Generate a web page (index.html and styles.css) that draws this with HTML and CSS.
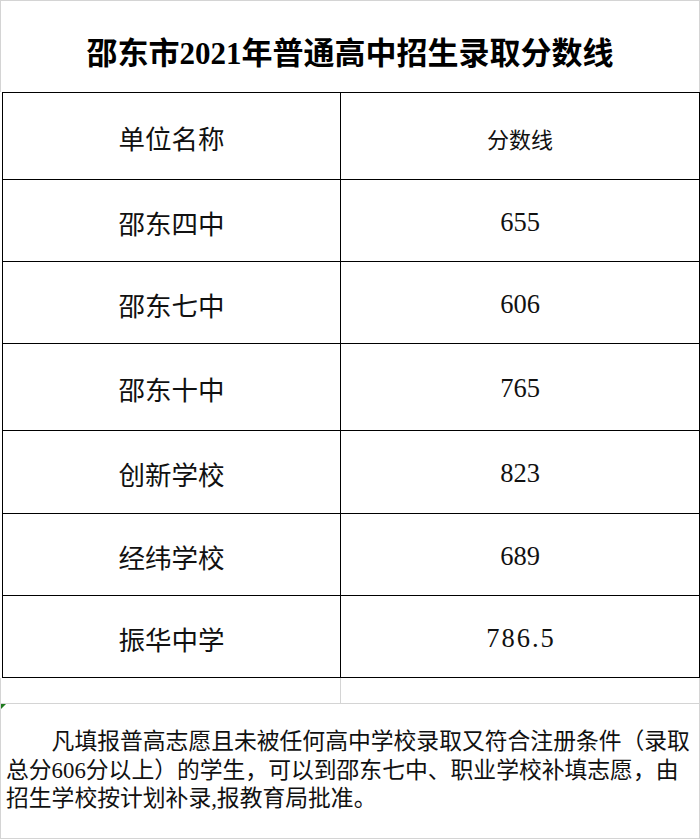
FILE: index.html
```html
<!DOCTYPE html>
<html lang="zh-CN">
<head>
<meta charset="utf-8">
<title>邵东市2021年普通高中招生录取分数线</title>
<link rel="stylesheet" href="styles.css">
</head>
<body>
<div class="sheet">
  <div class="title">邵东市2021年普通高中招生录取分数线</div>
  <div class="table">
    <div class="cell head">单位名称</div>
    <div class="cell head small">分数线</div>
    <div class="cell">邵东四中</div>
    <div class="cell">655</div>
    <div class="cell">邵东七中</div>
    <div class="cell">606</div>
    <div class="cell">邵东十中</div>
    <div class="cell">765</div>
    <div class="cell">创新学校</div>
    <div class="cell">823</div>
    <div class="cell">经纬学校</div>
    <div class="cell">689</div>
    <div class="cell">振华中学</div>
    <div class="cell decimal">786.5</div>
  </div>
  <div class="blank">
    <div class="blank-cell"></div>
    <div class="blank-cell"></div>
  </div>
  <div class="note">
    <span class="flag"></span>
    <p class="note-text">凡填报普高志愿且未被任何高中学校录取又符合注册条件（录取总分606分以上）的学生，可以到邵东七中、职业学校补填志愿，由招生学校按计划补录,报教育局批准。</p>
  </div>
</div>
</body>
</html>
```

FILE: styles.css
```css
html, body {
  margin: 0;
  padding: 0;
  background: #ffffff;
}

body {
  font-family: "Liberation Serif", "Noto Sans CJK SC", serif;
  color: #111111;
}

.sheet {
  width: 700px;
}

.title {
  box-sizing: border-box;
  width: 700px;
  height: 92px;
  border-top: 1px solid #d4d4d4;
  border-left: 1px solid #d4d4d4;
  border-right: 1px solid #d4d4d4;
  display: flex;
  align-items: center;
  justify-content: center;
  padding-top: 7px;
  font-size: 31px;
  font-weight: 700;
  color: #000000;
}

.table {
  display: grid;
  grid-template-columns: 337px 358px;
  grid-template-rows: 86px 81px 81px 86px 82px 81px 81px;
  gap: 1px;
  background: #000000;
  border: 1px solid #000000;
  margin-left: 2px;
  width: 696px;
}

.cell {
  background: #ffffff;
  display: flex;
  align-items: center;
  justify-content: center;
  padding-top: 3px;
  box-sizing: border-box;
  font-size: 26.5px;
}

.cell.small {
  font-size: 22px;
}

.cell.decimal {
  letter-spacing: 2px;
  padding-left: 2px;
}

.blank {
  display: grid;
  grid-template-columns: 340px 360px;
  height: 26px;
  box-sizing: border-box;
  border-bottom: 1px solid #d4d4d4;
}

.blank-cell {
  border-left: 1px solid #d4d4d4;
}

.blank-cell + .blank-cell {
  border-right: 1px solid #d4d4d4;
}

.note {
  position: relative;
  box-sizing: border-box;
  width: 700px;
  height: 135px;
  border-left: 1px solid #d4d4d4;
  border-right: 1px solid #d4d4d4;
  border-bottom: 1px solid #d4d4d4;
  padding: 24px 4px 0 5px;
}

.flag {
  position: absolute;
  left: 0;
  top: 0;
  width: 0;
  height: 0;
  border-top: 5px solid #1f7a1f;
  border-right: 5px solid transparent;
}

.note-text {
  margin: 0;
  font-size: 22.8px;
  line-height: 28.5px;
  text-indent: 2em;
}
```
